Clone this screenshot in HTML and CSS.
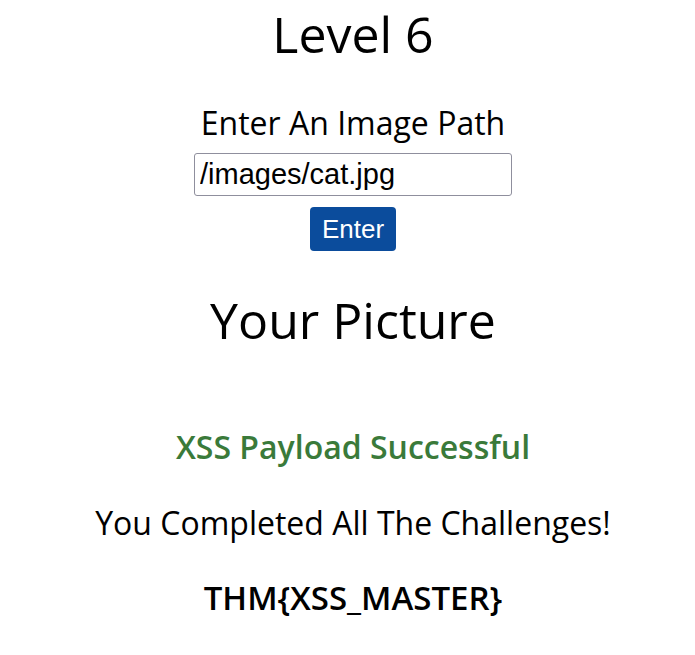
FILE: index.html
```html
<!DOCTYPE html>
<html>
<head>
<meta charset="utf-8">
<link rel="stylesheet" href="styles.css">
</head>
<body>
<main class="page">
  <h1 class="title">Level 6</h1>
  <form class="path-form">
    <label class="label" for="path">Enter An Image Path</label>
    <input class="path-input" id="path" type="text" value="/images/cat.jpg">
    <button class="enter-btn" type="button">Enter</button>
  </form>
  <h1 class="title picture-title">Your Picture</h1>
  <p class="success">XSS Payload Successful</p>
  <p class="complete">You Completed All The Challenges!</p>
  <p class="flag">THM{XSS_MASTER}</p>
</main>
</body>
</html>
```

FILE: styles.css
```css
html, body {
  margin: 0;
  padding: 0;
  background: #ffffff;
}
.page {
  box-sizing: border-box;
  padding-left: 11px;
  font-family: "Open Sans", "Noto Sans", sans-serif;
  color: #000;
  text-align: center;
  display: flex;
  flex-direction: column;
  align-items: center;
}
.title {
  margin: 4px 0 0;
  font-size: 50px;
  font-weight: 400;
  line-height: 60px;
}
.path-form {
  display: flex;
  flex-direction: column;
  align-items: center;
  margin-top: 41px;
}
.label {
  font-size: 32px;
  line-height: 36px;
}
.path-input {
  margin-top: 12px;
  box-sizing: border-box;
  width: 318px;
  height: 43px;
  border: 1px solid #8f8f9d;
  border-radius: 3px;
  padding: 0 5px;
  font-family: "Liberation Sans", Arial, sans-serif;
  font-size: 29px;
  color: #000;
}
.enter-btn {
  margin-top: 11px;
  box-sizing: border-box;
  width: 86px;
  height: 44px;
  border: none;
  border-radius: 4px;
  background: #0b4c9c;
  color: #fff;
  font-family: "Liberation Sans", Arial, sans-serif;
  font-size: 26px;
  padding: 0;
}
.picture-title {
  margin-top: 39px;
}
.success {
  margin: 77px 0 0;
  font-size: 32px;
  line-height: 40px;
  font-weight: 600;
  color: #3a7a3a;
}
.complete {
  margin: 36px 0 0;
  font-size: 32px;
  line-height: 40px;
}
.flag {
  margin: 35px 0 0;
  font-size: 33px;
  line-height: 40px;
  font-weight: 600;
}
```
